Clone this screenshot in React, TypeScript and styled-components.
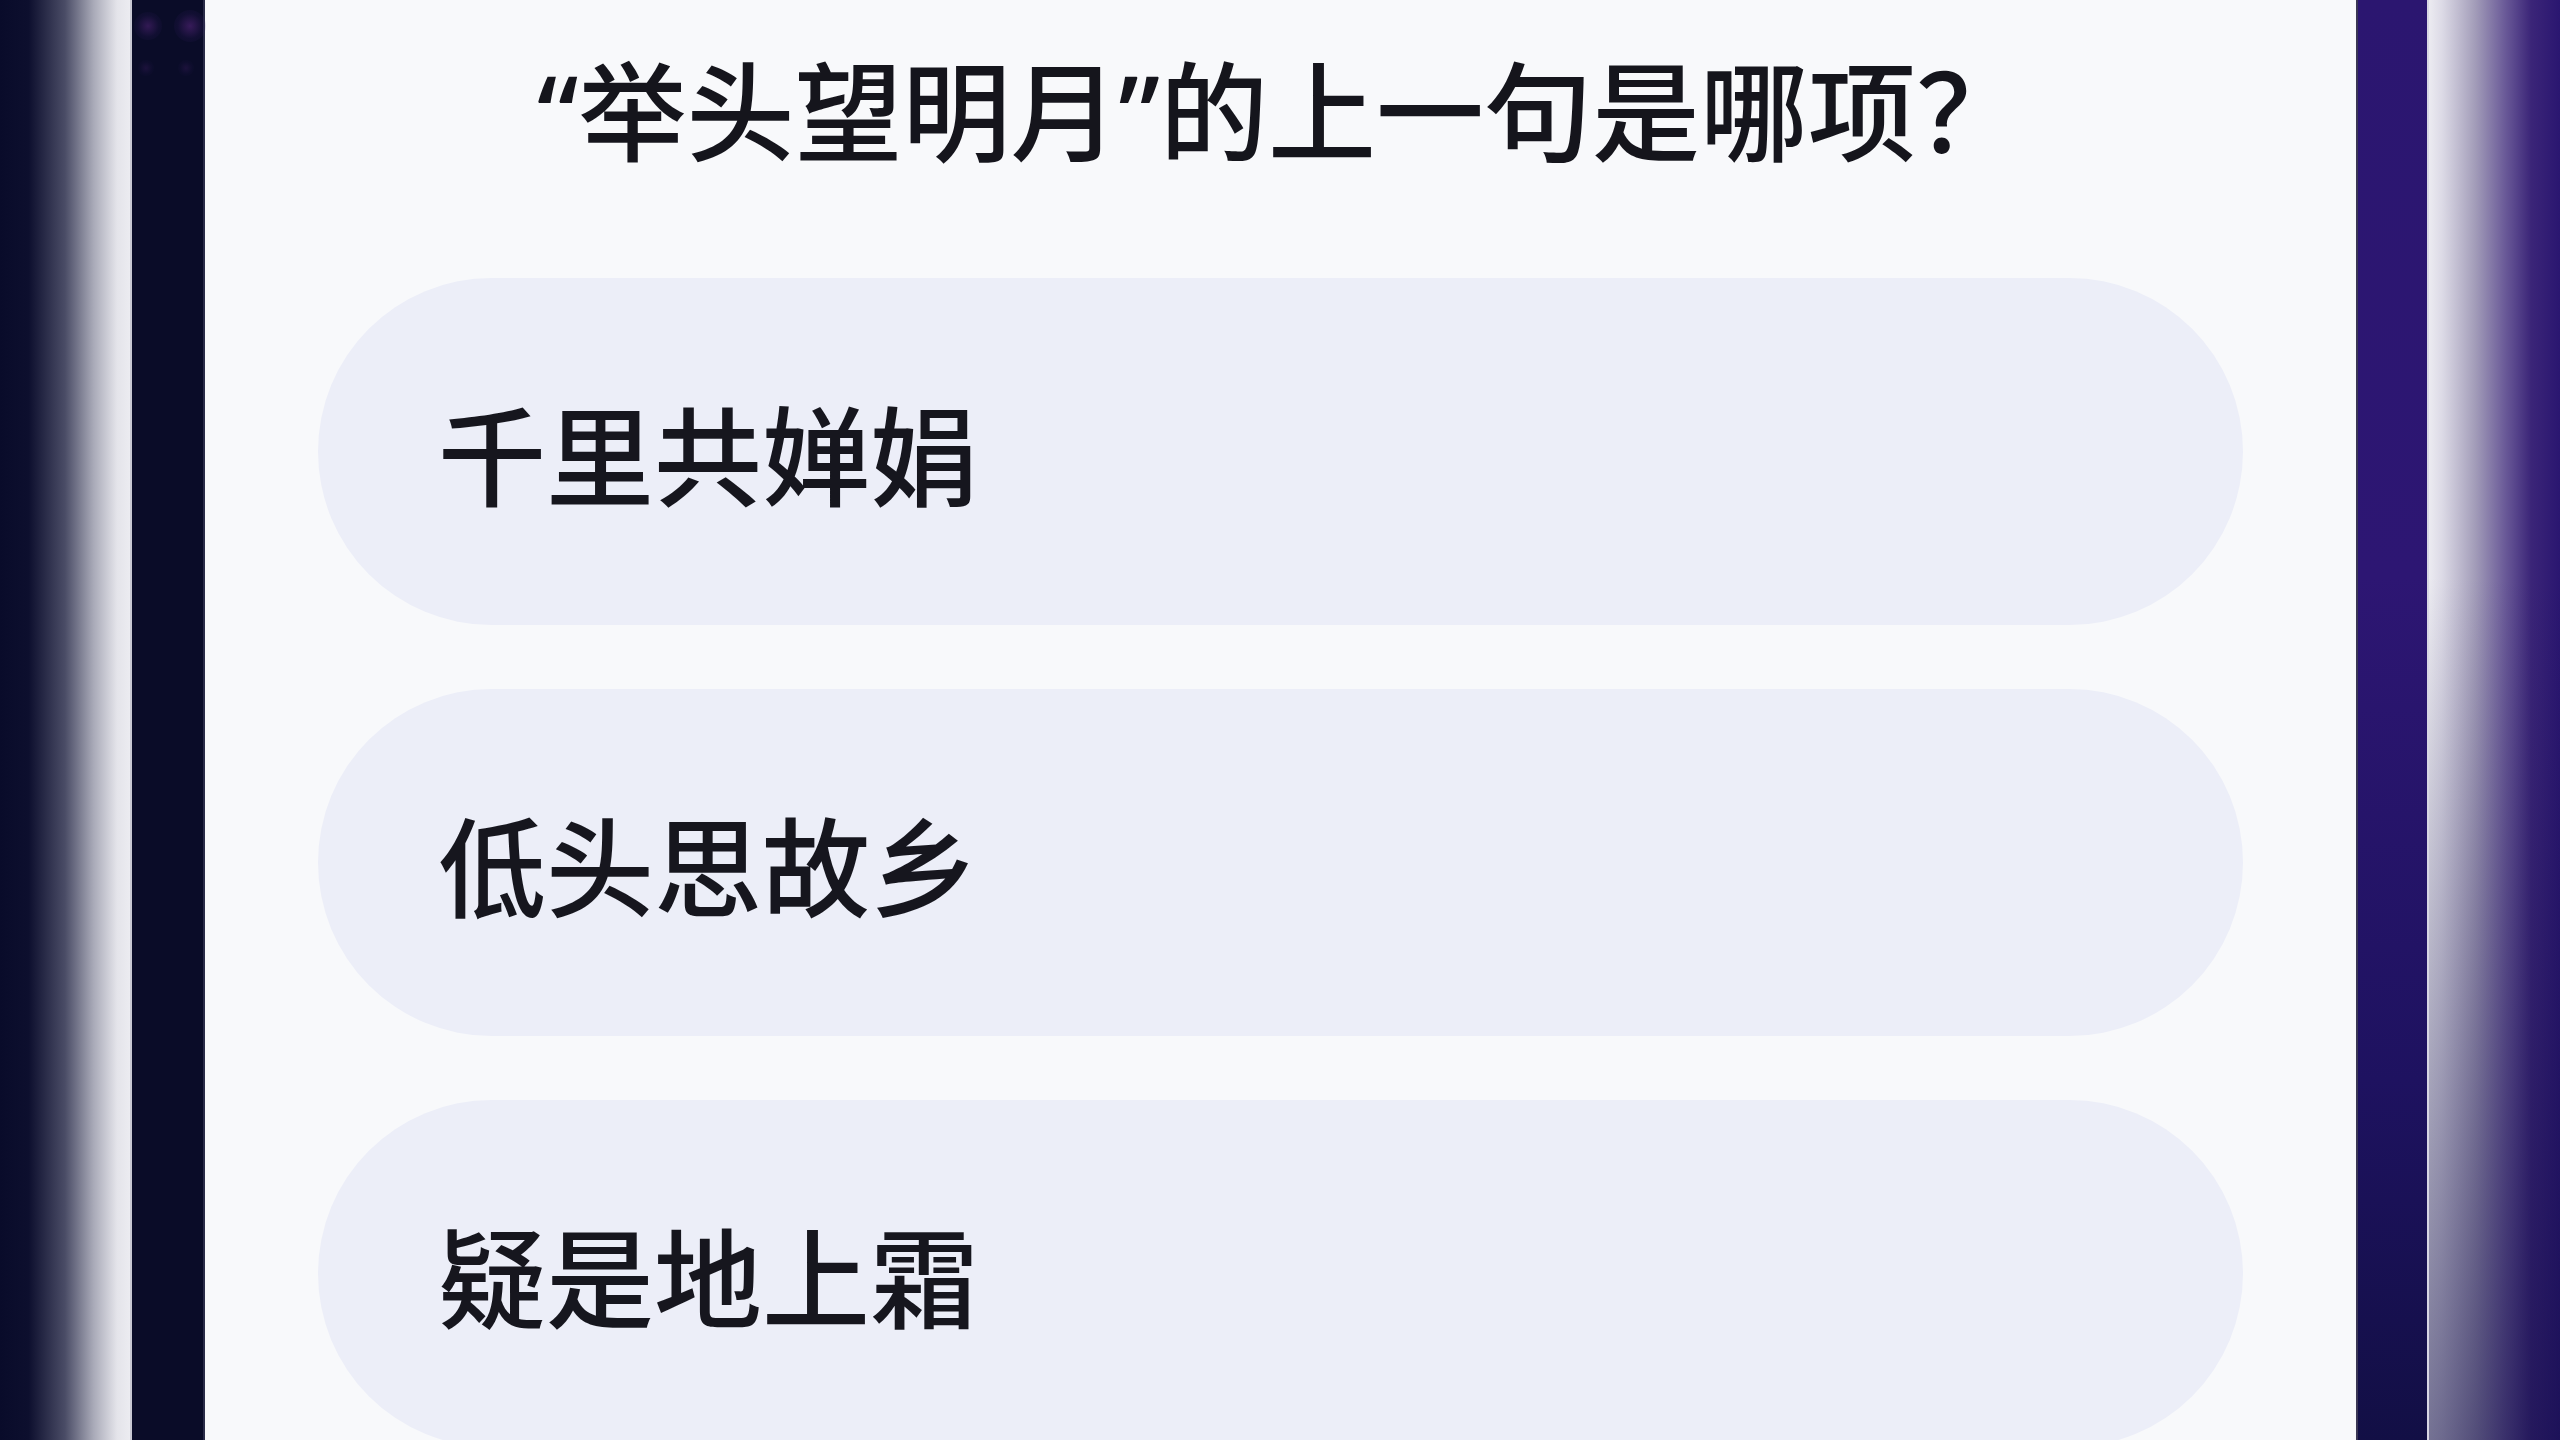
import styled, { createGlobalStyle } from 'styled-components'

const GlobalStyle = createGlobalStyle`
  html, body {
    margin: 0;
    padding: 0;
    background: #0a0c28;
  }
  #root {
    height: 1440px;
  }
`

const Screen = styled.div`
  display: flex;
  width: 2560px;
  height: 1440px;
  overflow: hidden;
  font-family: 'Noto Sans', 'Noto Sans CJK SC', sans-serif;
`

// blurry edge of the video frame on either side
const EdgeFade = styled.div<{ $side: 'left' | 'right' }>`
  flex: 0 0 ${(p) => (p.$side === 'left' ? 130 : 131)}px;
  background: ${(p) =>
    p.$side === 'left'
      ? 'linear-gradient(90deg, #090b2a 0%, #0d0f2e 22%, #4a4c66 50%, #a9aab8 72%, #e4e4ea 90%, #ececf1 100%)'
      : 'linear-gradient(90deg, #ecebf1 0%, #dcdae6 10%, #a39db9 35%, #6a5a98 58%, #3b2578 78%, #2a1670 100%)'};
  ${(p) =>
    p.$side === 'right' &&
    `
    &::after {
      content: '';
      display: block;
      height: 100%;
      background: linear-gradient(180deg, rgba(18, 14, 70, 0) 40%, rgba(18, 14, 70, 0.55) 100%);
    }
  `}
`

const Rail = styled.div<{ $side: 'left' | 'right' }>`
  position: relative;
  flex: 0 0 ${(p) => (p.$side === 'left' ? 75 : 73)}px;
  background: ${(p) =>
    p.$side === 'left'
      ? '#0a0c28'
      : 'linear-gradient(180deg, #2b1670 0%, #2d1673 40%, #1e1260 75%, #120f45 100%)'};
  border-left: 2px solid ${(p) => (p.$side === 'left' ? '#c9c9d4' : '#3a3654')};
  border-right: 2px solid ${(p) => (p.$side === 'left' ? '#2a2c48' : '#d8d6e4')};
  box-sizing: border-box;
`

const Glow = styled.span<{ $x: number; $y: number; $size: number; $alpha: number }>`
  position: absolute;
  left: ${(p) => p.$x}px;
  top: ${(p) => p.$y}px;
  width: ${(p) => p.$size}px;
  height: ${(p) => p.$size}px;
  border-radius: 50%;
  background: radial-gradient(
    circle,
    rgba(110, 45, 150, ${(p) => p.$alpha}) 0%,
    rgba(60, 30, 110, ${(p) => p.$alpha * 0.35}) 55%,
    rgba(10, 12, 40, 0) 100%
  );
`

const Panel = styled.main`
  flex: 1;
  display: flex;
  flex-direction: column;
  background: #f8f9fb;
  padding: 47px 113px 0;
  box-sizing: border-box;
`

const Question = styled.h1`
  margin: 0;
  font-size: 108px;
  line-height: 130px;
  font-weight: 500;
  color: #15151c;
  text-align: center;
  letter-spacing: 0;
`

const Options = styled.div`
  display: flex;
  flex-direction: column;
  gap: 64px;
  margin-top: 101px;
`

const Option = styled.button`
  flex: 0 0 347px;
  display: flex;
  align-items: center;
  padding: 0 0 0 120px;
  border: 0;
  border-radius: 174px;
  background: #eceef8;
  font-family: inherit;
  font-size: 108px;
  font-weight: 500;
  color: #16161e;
  text-align: left;
  cursor: pointer;
`

const answers = ['千里共婵娟', '低头思故乡', '疑是地上霜']

export default function App() {
  return (
    <Screen>
      <GlobalStyle />
      <EdgeFade $side='left' />
      <Rail $side='left'>
        <Glow $x={2} $y={12} $size={28} $alpha={0.4} />
        <Glow $x={42} $y={10} $size={32} $alpha={0.45} />
        <Glow $x={6} $y={60} $size={16} $alpha={0.18} />
        <Glow $x={46} $y={60} $size={16} $alpha={0.18} />
      </Rail>
      <Panel>
        <Question>“举头望明月”的上一句是哪项？</Question>
        <Options>
          {answers.map((a) => (
            <Option key={a}>{a}</Option>
          ))}
        </Options>
      </Panel>
      <Rail $side='right' />
      <EdgeFade $side='right' />
    </Screen>
  )
}
